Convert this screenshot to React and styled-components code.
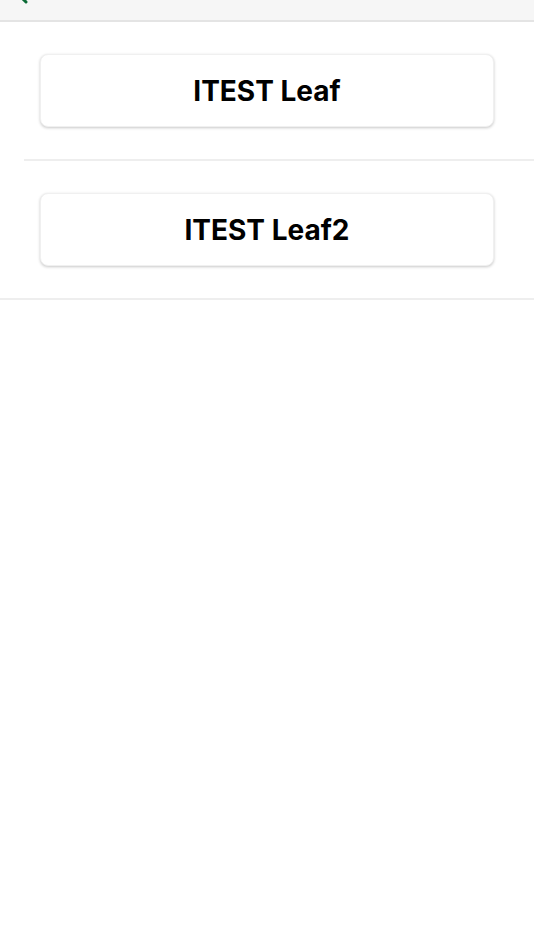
import React from "react";
import styled, { createGlobalStyle } from "styled-components";

const Global = createGlobalStyle`
  html, body { margin: 0; padding: 0; background: #ffffff; }
  body { font-family: Inter, "Noto Sans", sans-serif; }
`;

const Page = styled.div`
  width: 534px;
  min-height: 950px;
  background: #ffffff;
`;

const Header = styled.header`
  height: 20px;
  background: #f6f6f6;
  border-bottom: 2px solid #e4e4e4;
  position: relative;
`;

const BackIcon = styled.svg`
  position: absolute;
  left: 0;
  top: 0;
  width: 40px;
  height: 21px;
  overflow: visible;
`;

const List = styled.ul`
  list-style: none;
  margin: 0;
  padding: 0;
`;

const Row = styled.li`
  padding: 32px 40px 32px ${(p) => (p.$last ? "40px" : "16px")};
  margin-left: ${(p) => (p.$last ? "0" : "24px")};
  border-bottom: 2px solid #eeeeee;
`;

const Card = styled.button`
  display: flex;
  align-items: center;
  justify-content: center;
  width: 100%;
  height: 73px;
  margin: 0;
  padding: 0;
  background: #ffffff;
  border: 1px solid #f0f0f0;
  border-radius: 8px;
  box-shadow: 0 1px 3px rgba(0, 0, 0, 0.22);
  font-family: Inter, "Noto Sans", sans-serif;
  font-weight: 700;
  font-size: 28px;
  color: #000000;
  cursor: pointer;
`;

const items = ["ITEST Leaf", "ITEST Leaf2"];

export default function App() {
  return (
    <Page>
      <Global />
      <Header>
        <BackIcon viewBox="0 0 40 21">
          <path
            d="M26 2 L16 -8 L26 -18"
            fill="none"
            stroke="#0b6b36"
            strokeWidth="3"
            strokeLinecap="round"
            strokeLinejoin="round"
          />
        </BackIcon>
      </Header>
      <List>
        {items.map((t, i) => (
          <Row key={t} $last={i === items.length - 1}>
            <Card>{t}</Card>
          </Row>
        ))}
      </List>
    </Page>
  );
}
